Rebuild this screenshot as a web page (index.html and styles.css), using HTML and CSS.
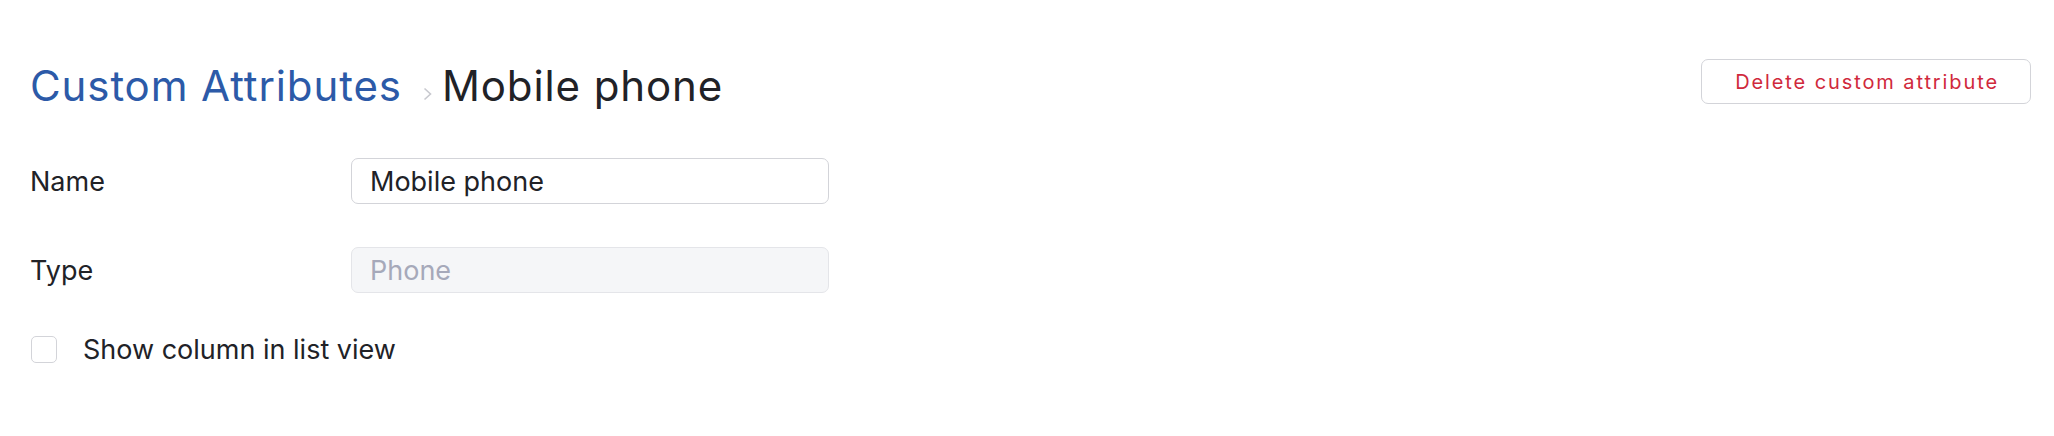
FILE: index.html
```html
<!DOCTYPE html>
<html><head><meta charset="UTF-8" /><link rel="stylesheet" href="styles.css"></head>
<body>
<main class="page">
	<header class="page-head">
		<h1 class="crumbs">
			<a class="crumb-link" href="#">Custom Attributes</a>
			<svg class="crumb-sep" width="9" height="14" viewBox="0 0 9 14"><path d="M1.5 1.5l6 5.5-6 5.5" fill="none" stroke="currentColor" stroke-width="1.6" /></svg>
			<span class="crumb-here">Mobile phone</span>
		</h1>
		<button class="btn-danger" type="button">Delete custom attribute</button>
	</header>
	<form class="attr-form">
		<div class="field">
			<label class="field-label" for="name">Name</label>
			<input class="field-input" id="name" type="text" value="Mobile phone" />
		</div>
		<div class="field">
			<label class="field-label" for="type">Type</label>
			<input class="field-input" id="type" type="text" value="Phone" disabled />
		</div>
		<label class="check">
			<input class="check-box" type="checkbox" />
			<span>Show column in list view</span>
		</label>
	</form>
</main>
</body></html>
```

FILE: styles.css
```css
body { margin: 0; background: #fff; color: #212227;
	font-family: Inter, "Noto Sans", sans-serif;
}
.page { padding: 59px 23px 0 30px; }
.page-head { display: flex; align-items: flex-start; justify-content: space-between; }
.crumbs { margin: 3px 0 0; display: flex; align-items: baseline;
	font-size: 42px; font-weight: 400; line-height: 48px; letter-spacing: 0.9px;
}
.crumb-link { color: #2c5aa8; text-decoration: none; }
.crumb-sep { color: #c8c9cf; margin: 0 10px 3px 21px; }
.crumb-here { color: #212227; }
.btn-danger { height: 45px; padding: 0 31px 0 33px; background: #fff;
	border: 1.5px solid #d3d4d9; border-radius: 7px;
	color: #d0293c; font: 20px Inter, "Noto Sans", sans-serif; letter-spacing: 1.9px;
}
.attr-form { margin-top: 48px; display: flex; flex-direction: column; }
.field { display: flex; align-items: center; margin-bottom: 43px; }
.field-label { width: 321px; font-size: 27px; }
.field-input { width: 478px; height: 46px; box-sizing: border-box; padding: 0 18px;
	border: 1.5px solid #d3d4d9; border-radius: 7px; background: #fff;
	color: #212227; font: 27px Inter, "Noto Sans", sans-serif;
}
.field-input:disabled { background: #f5f6f8; border-color: #e4e5e9; color: #a6a9ba; }
.check { display: flex; align-items: center; font-size: 27px; margin-top: -3px; }
.check-box { appearance: none; margin: 0 26px 0 1px; width: 26px; height: 27px;
	border: 1.5px solid #d3d4d9; border-radius: 5px; background: #fff;
}
```
